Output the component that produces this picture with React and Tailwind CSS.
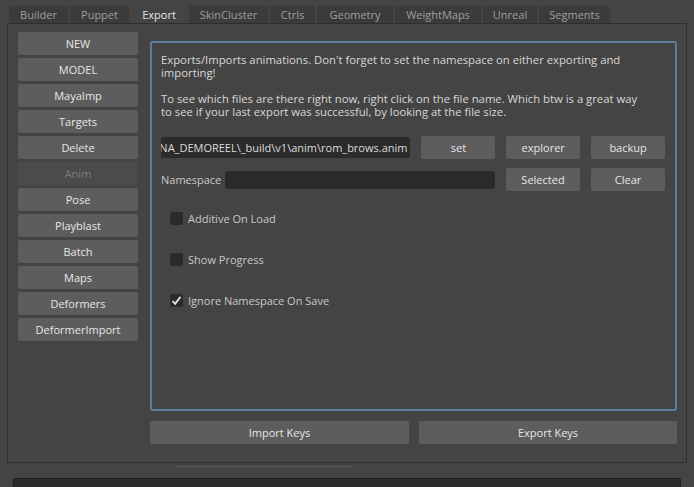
import React from 'react';

const tabs = [
  { name: 'Builder', w: 59 },
  { name: 'Puppet', w: 59 },
  { name: 'Export', w: 56, active: true },
  { name: 'SkinCluster', w: 79 },
  { name: 'Ctrls', w: 45 },
  { name: 'Geometry', w: 76 },
  { name: 'WeightMaps', w: 86 },
  { name: 'Unreal', w: 54 },
  { name: 'Segments', w: 71 },
];

const sideButtons = [
  'NEW', 'MODEL', 'MayaImp', 'Targets', 'Delete', 'Anim',
  'Pose', 'Playblast', 'Batch', 'Maps', 'Deformers', 'DeformerImport',
];

const Btn = ({ children, className = '' }) => (
  <div className={`flex items-center justify-center bg-[#5d5d5d] text-[#e6e6e6] rounded-[2px] whitespace-nowrap ${className}`}>
    {children}
  </div>
);

const Check = ({ label, checked }) => (
  <div className="flex items-center gap-[5px] h-[14px]">
    <div className="w-[13px] h-[13px] bg-[#2b2b2b] rounded-[2px] flex items-center justify-center">
      {checked && (
        <svg width="11" height="11" viewBox="0 0 11 11">
          <path d="M1.5 6 L4.2 8.8 L9.5 1.8" fill="none" stroke="#e8e8e8" strokeWidth="1.8" />
        </svg>
      )}
    </div>
    <span className="text-[#c8c8c8]">{label}</span>
  </div>
);

export default function App() {
  return (
    <div
      className="w-[694px] h-[487px] bg-[#444444] overflow-hidden text-[11px] leading-[13px]"
      style={{ fontFamily: '"Open Sans", "DejaVu Sans", sans-serif' }}
    >
      {/* tab strip */}
      <div className="flex pt-[6px] pl-[9px] gap-[2px] h-[23px]">
        {tabs.map(t => (
          <div
            key={t.name}
            style={{ width: t.w }}
            className={`h-[17px] flex items-center justify-center rounded-t-[2px] ${
              t.active ? 'bg-[#444444] text-[#e6e6e6]' : 'bg-[#3b3b3b] text-[#9e9e9e]'
            }`}
          >
            {t.name}
          </div>
        ))}
      </div>

      {/* tab content */}
      <div className="mx-[7px] h-[440px] border border-[#2e2e2e] flex pl-[10px] pt-[8px]">
        <div className="w-[120px] flex flex-col gap-[3px]">
          {sideButtons.map(b =>
            b === 'Anim' ? (
              <div key={b} className="h-[23px] flex items-center justify-center bg-[#4b4b4b] text-[#7c7c7c] rounded-[2px]">
                {b}
              </div>
            ) : (
              <Btn key={b} className="h-[23px]">{b}</Btn>
            )
          )}
        </div>

        <div className="ml-[12px] pt-[9px] w-[527px] flex flex-col">
          <div className="h-[370px] border-2 border-[#5f7d96] rounded-[3px] pl-[9px] pr-[10px] pt-[10px] text-[#d8d8d8]">
            <div className="w-[484px] text-[11.3px]">
              <p>Exports/Imports animations. Don't forget to set the namespace on either exporting and importing!</p>
              <p className="mt-[13px]">
                To see which files are there right now, right click on the file name. Which btw is a great way to see if your last export was successful, by looking at the file size.
              </p>
            </div>

            <div className="flex items-center mt-[18px] h-[23px]">
              <div className="w-[250px] h-[21px] bg-[#2b2b2b] rounded-[2px] overflow-hidden flex justify-end items-center pr-[3px] whitespace-nowrap text-[#dcdcdc]">
                D:\work\ANNA_DEMOREEL\_build\v1\anim\rom_brows.anim
              </div>
              <Btn className="ml-[11px] w-[74px] h-[23px]">set</Btn>
              <Btn className="ml-[11px] w-[74px] h-[23px]">explorer</Btn>
              <Btn className="ml-[11px] w-[74px] h-[23px]">backup</Btn>
            </div>

            <div className="flex items-center mt-[9px] h-[23px]">
              <span className="w-[64px] text-[#c8c8c8]">Namespace</span>
              <div className="w-[270px] h-[18px] bg-[#2b2b2b] rounded-[2px]" />
              <Btn className="ml-[11px] w-[74px] h-[23px]">Selected</Btn>
              <Btn className="ml-[11px] w-[74px] h-[23px]">Clear</Btn>
            </div>

            <div className="ml-[9px] mt-[20px] flex flex-col gap-[27px]">
              <Check label="Additive On Load" />
              <Check label="Show Progress" />
              <Check label="Ignore Namespace On Save" checked />
            </div>
          </div>

          <div className="flex gap-[10px] mt-[10px]">
            <Btn className="w-[259px] h-[23px]">Import Keys</Btn>
            <Btn className="w-[258px] h-[23px]">Export Keys</Btn>
          </div>
        </div>
      </div>

      {/* splitter */}
      <div className="h-[15px] flex items-start pt-[3px]">
        <div className="ml-[178px] w-[174px] border-t border-dotted border-[#6a6a6a]" />
      </div>

      {/* bottom bar */}
      <div className="mx-[13px] h-[10px] bg-[#2b2b2b] border border-[#1f1f1f] rounded-t-[2px]" />
    </div>
  );
}
